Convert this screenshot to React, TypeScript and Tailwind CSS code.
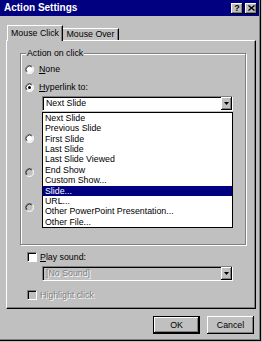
import React from 'react';

// Boîte de dialogue "Action Settings" façon Windows 98

const raised = 'bg-[#c0c0c0] shadow-[inset_-1px_-1px_#000,inset_1px_1px_#fff,inset_-2px_-2px_#808080]';
const sunken = 'border border-t-[#808080] border-l-[#808080] border-b-white border-r-white shadow-[inset_1px_1px_#000]';
const disabledText = 'text-[#808080] [text-shadow:1px_1px_0_#fff]';

function Radio({ checked = false, disabled = false }: { checked?: boolean; disabled?: boolean }) {
  return (
    <svg width="9" height="9" viewBox="0 0 12 12" className="shrink-0">
      <circle cx="6" cy="6" r="5.5" fill={disabled ? '#c0c0c0' : '#fff'} />
      <path d="M9.9 2.1A5.5 5.5 0 0 0 2.1 9.9" stroke="#808080" strokeWidth="1.2" fill="none" />
      <path d="M9.2 2.8A4.5 4.5 0 0 0 2.8 9.2" stroke="#000" strokeWidth="1" fill="none" />
      <path d="M2.1 9.9A5.5 5.5 0 0 0 9.9 2.1" stroke="#fff" strokeWidth="1.2" fill="none" />
      <path d="M2.8 9.2A4.5 4.5 0 0 0 9.2 2.8" stroke="#dfdfdf" strokeWidth="1" fill="none" />
      {checked && <circle cx="6" cy="6" r="2" fill="#000" />}
    </svg>
  );
}

function Checkbox({ disabled = false }: { disabled?: boolean }) {
  return <div className={`w-[10px] h-[10px] shrink-0 ${sunken} ${disabled ? 'bg-[#c0c0c0]' : 'bg-white'}`} />;
}

function DropButton() {
  return (
    <div className={`w-[11px] h-full flex items-center justify-center ${raised}`}>
      <svg width="5" height="3" viewBox="0 0 5 3">
        <path d="M0 0H5L2.5 3Z" fill="#000" />
      </svg>
    </div>
  );
}

const items = [
  'Next Slide',
  'Previous Slide',
  'First Slide',
  'Last Slide',
  'Last Slide Viewed',
  'End Show',
  'Custom Show...',
  'Slide...',
  'URL...',
  'Other PowerPoint Presentation...',
  'Other File...',
];

export default function App() {
  return (
    <div className="w-[262px] h-[342px] bg-[#c0c0c0] font-['Liberation_Sans',Arial,sans-serif] text-[8.8px] leading-none text-black select-none">
      <div className="w-[261px] h-[341px] flex flex-col shadow-[inset_-1px_-1px_#000,inset_-2px_-2px_#808080]">
        {/* Barre de titre */}
        <div className="w-[259px] h-[16px] bg-[#000080] flex items-center justify-between pl-[4px] pr-[2px]">
          <span className="text-white font-bold text-[10px]">Action Settings</span>
          <div className="flex gap-[2px]">
            <div className={`w-[12px] h-[11px] flex items-center justify-center font-bold text-[9px] ${raised}`}>?</div>
            <div className={`w-[12px] h-[11px] flex items-center justify-center ${raised}`}>
              <svg width="7" height="6" viewBox="0 0 7 6">
                <path d="M0.5 0.5L6.5 5.5M6.5 0.5L0.5 5.5" stroke="#000" strokeWidth="1.4" />
              </svg>
            </div>
          </div>
        </div>

        {/* Onglets */}
        <div className="mt-[9px] h-[15px] flex items-start pl-[7px]">
          <div className="relative z-10 w-[56px] h-[16px] bg-[#c0c0c0] border-t border-l border-white shadow-[inset_-1px_0_#808080] border-r border-r-black flex items-center justify-center pb-[1px]">
            Mouse Click
          </div>
          <div className="mt-[3px] w-[56px] h-[12px] border-t border-white shadow-[inset_-1px_0_#808080] border-r border-r-black flex items-center justify-center">
            Mouse Over
          </div>
        </div>

        {/* Panneau */}
        <div className="ml-[6px] w-[250px] h-[269px] border-t border-l border-white border-r border-b border-r-black border-b-black shadow-[inset_-1px_-1px_#808080] flex flex-col">
          {/* Groupe Action on click */}
          <div className="relative ml-[13px] mt-[12px] w-[226px] h-[192px] border border-[#808080] shadow-[1px_1px_0_#fff,inset_1px_1px_0_#fff] flex flex-col">
            <span className="absolute -top-[5px] left-[5px] px-[1px] bg-[#c0c0c0]">Action on click</span>

            <div className="mt-[10px] ml-[4px] h-[10px] flex items-center gap-[5px]">
              <Radio />
              <span><span className="underline">N</span>one</span>
            </div>
            <div className="mt-[8px] ml-[4px] h-[10px] flex items-center gap-[5px]">
              <Radio checked />
              <span><span className="underline">H</span>yperlink to:</span>
            </div>

            <div className="relative ml-[21px] mt-[4px] w-[191px]">
              <div className={`h-[15px] flex items-center bg-white ${sunken}`}>
                <span className="flex-1 pl-[3px]">Next Slide</span>
                <DropButton />
              </div>
              {/* Liste déroulante ouverte */}
              <div className="absolute z-20 left-0 top-[16px] w-[191px] border border-black bg-white flex flex-col">
                {items.map((it) => (
                  <div
                    key={it}
                    className={`h-[10.4px] flex items-center pl-[2px] ${it === 'Slide...' ? 'bg-[#000080] text-white' : ''}`}
                  >
                    {it}
                  </div>
                ))}
              </div>
            </div>

            {/* Options masquées par la liste */}
            <div className="mt-[22px] ml-[4px] h-[10px] flex items-center">
              <Radio />
            </div>
            <div className="mt-[24px] ml-[4px] h-[10px] flex items-center">
              <Radio disabled />
            </div>
            <div className="mt-[25px] ml-[4px] h-[10px] flex items-center">
              <Radio disabled />
            </div>
          </div>

          {/* Son et surbrillance */}
          <div className="mt-[7px] ml-[20px] h-[10px] flex items-center gap-[3px]">
            <Checkbox />
            <span><span className="underline">P</span>lay sound:</span>
          </div>
          <div className={`ml-[35px] mt-[4px] w-[191px] h-[15px] flex items-center bg-[#c0c0c0] ${sunken}`}>
            <span className={`flex-1 pl-[3px] ${disabledText}`}>[No Sound]</span>
            <DropButton />
          </div>
          <div className="mt-[9px] ml-[20px] h-[10px] flex items-center gap-[3px]">
            <Checkbox disabled />
            <span className={disabledText}>Highlight click</span>
          </div>
        </div>

        {/* Boutons */}
        <div className="mt-[7px] ml-[153px] flex gap-[7px]">
          <div className="w-[47px] h-[18px] border border-black">
            <div className={`w-full h-full flex items-center justify-center ${raised}`}>OK</div>
          </div>
          <div className={`w-[47px] h-[18px] flex items-center justify-center ${raised}`}>Cancel</div>
        </div>
      </div>
    </div>
  );
}
